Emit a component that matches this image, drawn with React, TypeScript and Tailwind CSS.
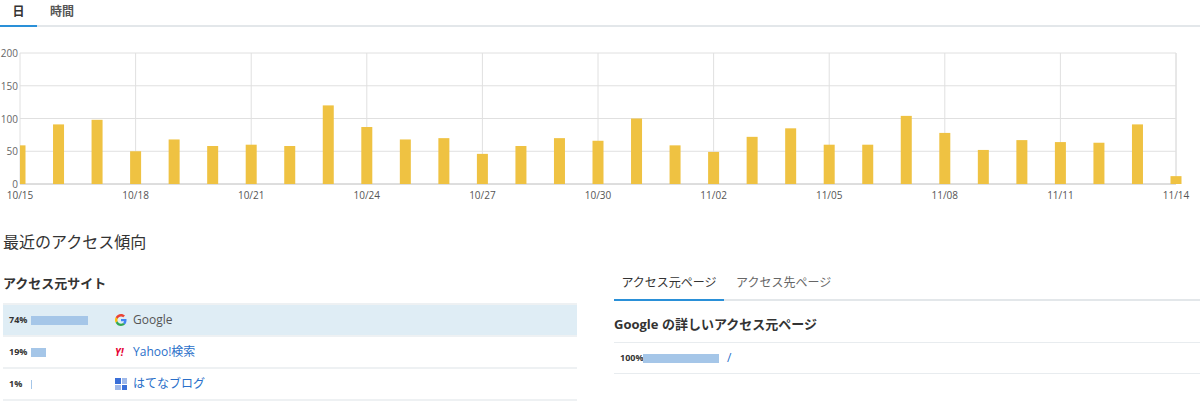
const vals=[59,91,98,50,68,58,60,58,120,87,68,70,46,58,70,66,100,59,49,72,85,60,60,104,78,52,67,64,63,91,12];
const labels=["10/15","10/18","10/21","10/24","10/27","10/30","11/02","11/05","11/08","11/11","11/14"];
const L=20,R=1176,T=11,B=142;
const step=(R-L)/30;
const y=(v:number)=>B-(v/200)*(B-T);
function Chart(){
  return <svg width="1200" height="165" className="block">
    {[0,50,100,150,200].map(v=><g key={v}><line x1={L} x2={R} y1={y(v)} y2={y(v)} stroke="#e0e0e0"/><text x={18} y={y(v)+4} textAnchor="end" fontSize="10" fill="#666">{v}</text></g>)}
    <line x1={R} x2={R} y1={T} y2={B} stroke="#e0e0e0"/>
    {labels.map((l,i)=>{const x=L+i*3*step;return <g key={l}><line x1={x} x2={x} y1={T} y2={B} stroke="#e0e0e0"/><text x={x} y={B+15} textAnchor="middle" fontSize="10" fill="#555">{l}</text></g>})}
    <line x1={L} x2={R} y1={B} y2={B} stroke="#ccc"/>
    {vals.map((v,i)=>{const cx=L+i*step;const x0=Math.max(L,cx-5.5);const x1=cx+5.5;return <rect key={i} x={x0} y={y(v)} width={x1-x0} height={B-y(v)} fill="#efc242"/>})}
  </svg>;
}
const G=()=> <svg width="12" height="12" viewBox="0 0 48 48"><path fill="#EA4335" d="M24 9.5c3.5 0 6.6 1.2 9.1 3.6l6.8-6.8C35.8 2.4 30.3 0 24 0 14.6 0 6.6 5.4 2.7 13.3l7.9 6.2C12.5 13.6 17.7 9.5 24 9.5z"/><path fill="#4285F4" d="M46.1 24.5c0-1.6-.1-3.1-.4-4.5H24v9h12.4c-.5 2.9-2.2 5.3-4.6 7l7.5 5.8c4.4-4 6.8-10 6.8-17.3z"/><path fill="#FBBC05" d="M10.5 28.6c-.5-1.4-.8-3-.8-4.6s.3-3.2.8-4.6l-7.9-6.2C1 16.6 0 20.2 0 24s1 7.4 2.7 10.7l7.8-6.1z"/><path fill="#34A853" d="M24 48c6.5 0 11.9-2.1 15.9-5.8l-7.5-5.8c-2.1 1.4-4.8 2.3-8.4 2.3-6.3 0-11.6-4.2-13.5-10l-7.8 6.1C6.6 42.6 14.6 48 24 48z"/></svg>;
export default function App(){
  const f={fontFamily:'"Open Sans","Noto Sans CJK JP",sans-serif'};
  return <div style={f} className="w-[1200px] h-[402px] overflow-hidden bg-white text-[#333]">
    <div className="flex h-[27px] border-b-2 border-[#e3e7ea] text-[12px] font-bold">
      <div className="w-[37px] flex justify-center pt-[3px] border-b-2 border-[#2a90d8] -mb-[2px]">日</div>
      <div className="px-[13px] pt-[3px] text-[#555]">時間</div>
    </div>
    <div className="mt-[15px]"><Chart/></div>
    <div className="mt-[23px] px-[3px] text-[16px]">最近のアクセス傾向</div>
    <div className="flex mt-[20px]">
      <div className="w-[577px] pl-[3px]">
        <div className="text-[13px] font-bold h-[29px]">アクセス元サイト</div>
        {[["74%",57,<G/>,"Google","#555",true],["19%",15,<span className="text-[#e60033] text-[10px] font-bold italic">Y!</span>,"Yahoo!検索","#2a6fc9",false],["1%",1,<span className="grid grid-cols-2 w-[12px] h-[12px] gap-[1px]"><span className="bg-[#3a6fd8]"/><span className="bg-[#9fb9ea]"/><span className="bg-[#9fb9ea]"/><span className="bg-[#3a6fd8]"/></span>,"はてなブログ","#2a6fc9",false]].map((r:any)=>
          <div key={r[0]} className={`flex items-center h-[32px] border-t-2 border-[#eef1f3] ${r[5]?"bg-[#dfedf5]":""}`}>
            <span className="w-[28px] pl-[6px] text-[9px] font-bold">{r[0]}</span>
            <span className="w-[84px]"><span className="block h-[9px] bg-[#a5c6e8]" style={{width:r[1]}}/></span>
            <span className="w-[18px] flex items-center">{r[2]}</span>
            <span className="text-[12px]" style={{color:r[4]}}>{r[3]}</span>
          </div>)}
        <div className="border-t-2 border-[#eef1f3]"/>
      </div>
      <div className="ml-[37px] flex-1">
        <div className="flex h-[29px] -mt-[2px] border-b-2 border-[#e3e7ea] text-[12px]">
          <div className="w-[110px] flex justify-center pt-[2px] border-b-2 border-[#2a90d8] -mb-[2px]">アクセス元ページ</div>
          <div className="px-[12px] pt-[2px] text-[#666]">アクセス先ページ</div>
        </div>
        <div className="text-[13px] font-bold mt-[14px] h-[27px]">Google の詳しいアクセス元ページ</div>
        <div className="flex items-center h-[32px] border-t border-b border-[#e8ecef]">
          <span className="w-[29px] pl-[6px] text-[9px] font-bold">100%</span>
          <span className="block h-[9px] w-[76px] bg-[#a5c6e8]"/>
          <span className="ml-[8px] text-[12px] text-[#2a6fc9]">/</span>
        </div>
      </div>
    </div>
  </div>;
}
